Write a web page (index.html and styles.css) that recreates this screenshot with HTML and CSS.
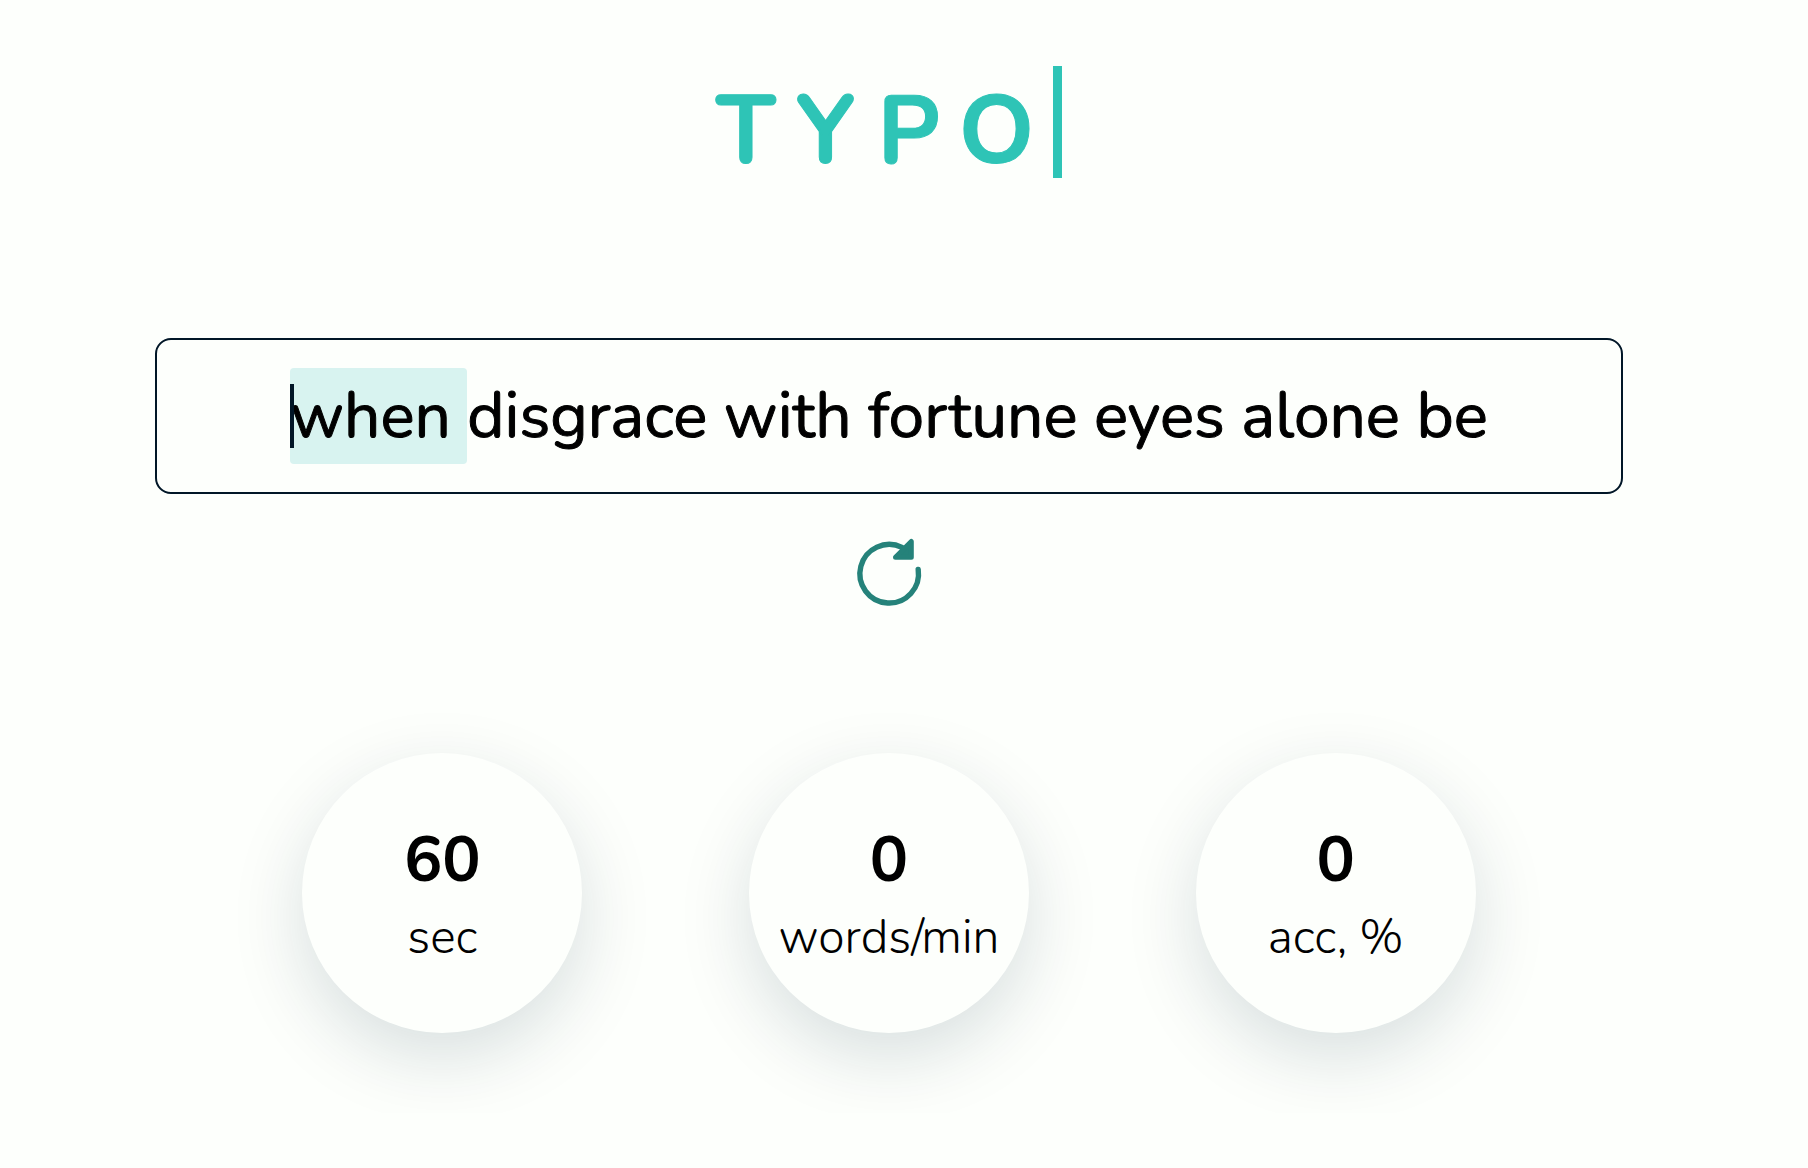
FILE: index.html
```html
<!DOCTYPE html>
<html lang="en">
<head>
  <meta charset="utf-8">
  <meta name="viewport" content="width=device-width, initial-scale=1">
  <title>Typo</title>
  <link rel="stylesheet" href="styles.css">
</head>
<body>
  <main class="page">
    <h1 class="logo">TYPO<span class="logo-cursor"></span></h1>

    <p class="words"><span class="word word-current">when </span>disgrace with fortune eyes alone be</p>

    <button class="restart" type="button" aria-label="Restart">
      <svg class="restart-icon" viewBox="0 0 72 72" aria-hidden="true">
        <path d="M65.200 31.500A29.300 29.300 0 1 1 49 9.400" fill="none" stroke="currentColor" stroke-width="5.400" stroke-linecap="round"/>
        <path d="M58.300 3.500V19.300H42.500Z" fill="currentColor" stroke="currentColor" stroke-width="5" stroke-linejoin="round"/>
      </svg>
    </button>

    <section class="stats">
      <div class="stat">
        <span class="stat-value">60</span>
        <span class="stat-label">sec</span>
      </div>
      <div class="stat">
        <span class="stat-value">0</span>
        <span class="stat-label">words/min</span>
      </div>
      <div class="stat">
        <span class="stat-value">0</span>
        <span class="stat-label">acc, %</span>
      </div>
    </section>
  </main>
</body>
</html>
```
FILE: styles.css
```css
* {
  box-sizing: border-box;
}

body {
  margin: 0;
  background: #fdfffc;
  color: #000;
  font-family: Nunito, Lato, sans-serif;
}

.page {
  display: flex;
  flex-direction: column;
  align-items: center;
  padding: 66px 185px 80px 155px;
}

.logo {
  display: flex;
  align-items: flex-start;
  margin: 0;
  color: #2ec4b6;
  font-size: 96px;
  font-weight: 700;
  line-height: 132px;
  letter-spacing: 19px;
  -webkit-text-stroke: 1px currentColor;
}

.logo-cursor {
  width: 9px;
  height: 112px;
  background: #2ec4b6;
}

.words {
  width: 100%;
  margin: 140px 0 0;
  padding: 28px;
  border: 2px solid #011627;
  border-radius: 16px;
  font-size: 64px;
  font-weight: 400;
  line-height: 96px;
  text-align: center;
  white-space: pre-wrap;
  -webkit-text-stroke: 1px currentColor;
}

.word-current {
  position: relative;
  display: inline-block;
  border-radius: 4px;
  background: #d8f3f0;
}

.word-current::before {
  content: "";
  position: absolute;
  top: 16px;
  left: 0;
  width: 4px;
  height: 64px;
  background: #011627;
}

.restart {
  margin: 44px 0 0;
  padding: 0;
  border: 0;
  background: none;
  color: #25827a;
  cursor: pointer;
}

.restart-icon {
  display: block;
  width: 72px;
  height: 72px;
}

.stats {
  display: grid;
  grid-template-columns: repeat(3, 1fr);
  justify-items: center;
  width: 100%;
  margin-top: 143px;
  padding: 0 64px;
}

.stat {
  display: flex;
  flex-direction: column;
  align-items: center;
  justify-content: center;
  width: 280px;
  height: 280px;
  padding-top: 8px;
  border-radius: 50%;
  background: #fdfffc;
  box-shadow: 0 24px 72px rgba(1, 40, 60, 0.15);
}

.stat-value {
  font-size: 64px;
  font-weight: 700;
  line-height: 80px;
}

.stat-label {
  font-size: 48px;
  font-weight: 300;
  line-height: 74px;
}
```
